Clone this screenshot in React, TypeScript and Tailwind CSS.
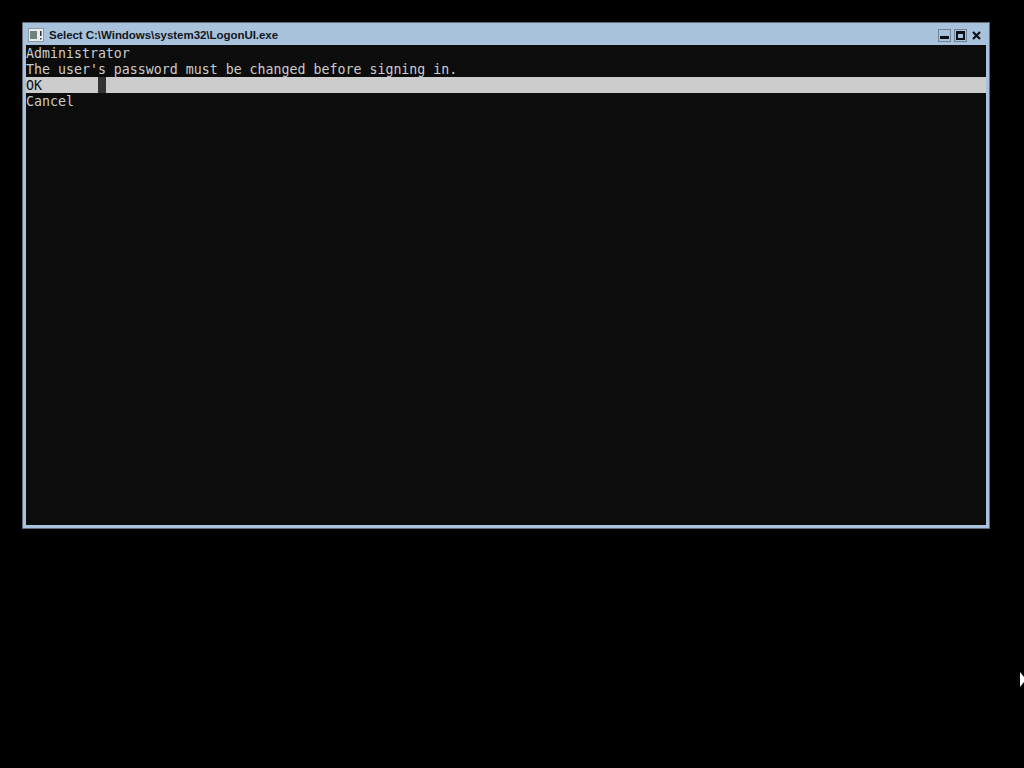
export default function App() {
  return (
    <div className="relative h-[768px] w-[1024px] overflow-hidden bg-black pl-[23px] pt-[23px]">
      <div className="flex h-[505px] w-[966px] flex-col border-[3px] border-t-0 border-[#a9c2db] bg-[#a9c2db] shadow-[0_0_0_1px_#5f6b78]">
        <div className="flex h-[22px] shrink-0 items-center bg-[#a9c2db]">
          <svg width="16" height="14" viewBox="0 0 16 14" className="ml-[2px] mt-[1px] shrink-0">
            <rect x="0.5" y="0.5" width="15" height="13" fill="#e8eef0" stroke="#8a9aa3" />
            <rect x="2" y="3" width="7" height="8" fill="#6f807d" />
            <rect x="12" y="3" width="1.5" height="5" fill="#27323a" />
            <rect x="12" y="10" width="1.5" height="1.5" fill="#27323a" />
          </svg>
          <span className="ml-[5px] mt-[4px] font-['Liberation_Sans',sans-serif] text-[11.5px] font-bold tracking-[-0.04px] text-[#10161d]">
            Select C:\Windows\system32\LogonUI.exe
          </span>
          <div className="ml-auto mr-[3px] mt-[2px] flex items-center gap-[3px]">
            <div className="flex h-[13px] w-[13px] items-end justify-center border border-[#6f8296] pb-[2px]">
              <div className="h-[3px] w-[9px] bg-[#0c1118]" />
            </div>
            <div className="flex h-[13px] w-[13px] items-center justify-center border border-[#6f8296]">
              <div className="h-[9px] w-[9px] border-2 border-t-[3px] border-[#0c1118]" />
            </div>
            <svg width="13" height="13" viewBox="0 0 13 13">
              <path d="M3 3 L10 10 M10 3 L3 10" stroke="#0c1118" strokeWidth="2.2" />
            </svg>
          </div>
        </div>
        <div className="flex-1 bg-[#0c0c0c] font-['DejaVu_Sans_Mono',monospace] text-[13.28px] leading-[18px] text-[#cccccc]">
          <div className="h-[16px] whitespace-pre">Administrator</div>
          <div className="h-[16px] whitespace-pre">The user's password must be changed before signing in.</div>
          <div className="flex h-[16px]">
            <div className="w-[72px] whitespace-pre bg-[#cccccc] text-[#0c0c0c]">OK</div>
            <div className="w-[8px] bg-[#333333]" />
            <div className="flex-1 bg-[#cccccc]" />
          </div>
          <div className="h-[16px] whitespace-pre">Cancel</div>
        </div>
      </div>
      <svg width="4" height="16" viewBox="0 0 4 16" className="absolute left-[1020px] top-[672px]">
        <path d="M0 0 L4 5 L4 10 L0 15 Z" fill="#ffffff" />
      </svg>
    </div>
  );
}
